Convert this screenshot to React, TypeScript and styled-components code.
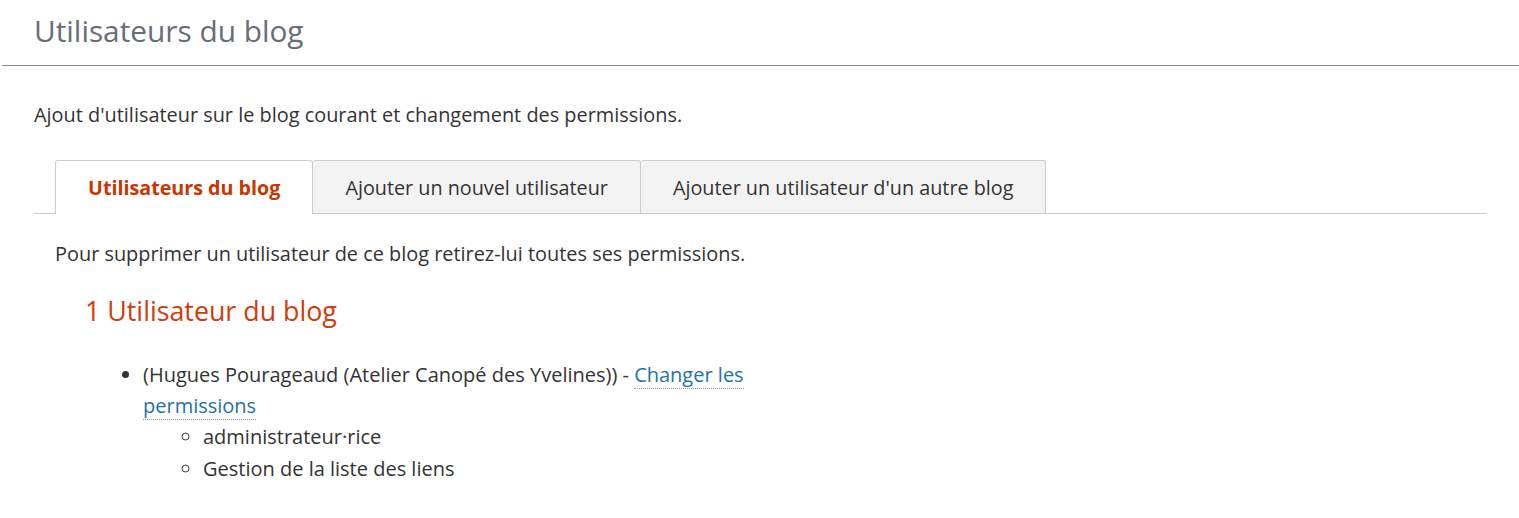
import React from 'react'
import styled, { createGlobalStyle } from 'styled-components';

const GlobalStyle = createGlobalStyle`
  html, body {
    margin: 0;
    padding: 0;
    background: #ffffff;
  }
  body {
    font-family: "Open Sans", "Noto Sans", sans-serif;
    color: #333333;
  }
`;

const tabs = [
  { label: 'Utilisateurs du blog', active: true },
  { label: 'Ajouter un nouvel utilisateur', active: false },
  { label: "Ajouter un utilisateur d'un autre blog", active: false },
];

const App = () => {
  return (
    <>
      <GlobalStyle />
      <Page>
        <Header>
          <Title>Utilisateurs du blog</Title>
        </Header>
        <Content>
          <Intro>Ajout d'utilisateur sur le blog courant et changement des permissions.</Intro>
          <TabBar>
            {tabs.map((t) => (
              <Tab key={t.label} active={t.active}>{t.label}</Tab>
            ))}
          </TabBar>
          <Panel>
            <Note>Pour supprimer un utilisateur de ce blog retirez-lui toutes ses permissions.</Note>
            <SubTitle>1 Utilisateur du blog</SubTitle>
            <UserList>
              <UserItem>
                (Hugues Pourageaud (Atelier Canopé des Yvelines)) - <PermLink href="#">Changer les permissions</PermLink>
                <PermList>
                  <PermItem>administrateur·rice</PermItem>
                  <PermItem>Gestion de la liste des liens</PermItem>
                </PermList>
              </UserItem>
            </UserList>
          </Panel>
        </Content>
      </Page>
    </>
  )
}

export default App;

const Page = styled.div`
  padding-left: 2px;
`;

const Header = styled.div`
  height: 65px;
  border-bottom: 1px solid #888888;
  display: flex;
  align-items: center;
  padding-left: 32px;
`;

const Title = styled.h2`
  margin: 0;
  font-size: 29.8px;
  font-weight: 400;
  color: #676e78;
  line-height: 1;
  padding-bottom: 4px;
`;

const Content = styled.div`
  padding: 0 32px;
`;

const Intro = styled.p`
  margin: 37px 0 0;
  font-size: 19.9px;
  line-height: 24px;
`;

const TabBar = styled.div`
  margin-top: 33px;
  display: flex;
  padding-left: 21px;
  border-bottom: 1px solid #cccccc;
`;

const Tab = styled.div<{ active: boolean }>`
  padding: 0 32px;
  display: flex;
  align-items: center;
  font-size: ${(p) => (p.active ? '19.7px' : '19.8px')};
  border: 1px solid #cccccc;
  border-bottom: none;
  border-left-width: ${(p) => (p.active ? '1px' : '0')};
  border-radius: 3px 3px 0 0;
  margin-bottom: ${(p) => (p.active ? '-1px' : '0')};
  height: ${(p) => (p.active ? '53px' : '52px')};
  background: ${(p) => (p.active ? '#ffffff' : '#f3f3f3')};
  color: ${(p) => (p.active ? '#c93600' : '#333333')};
  font-weight: ${(p) => (p.active ? 700 : 400)};
`;

const Panel = styled.div`
  padding-left: 21px;
`;

const Note = styled.p`
  margin: 28px 0 0;
  font-size: 19.9px;
  line-height: 24px;
`;

const SubTitle = styled.h3`
  margin: 28px 0 0 30px;
  font-size: 26.8px;
  font-weight: 400;
  line-height: 1.3;
  color: #d33c0a;
`;

const UserList = styled.ul`
  margin: 30px 0 0;
  padding-left: 88px;
  width: 610px;
  font-size: 20px;
  line-height: 31px;
`;

const UserItem = styled.li`
  list-style: disc;
`;

const PermLink = styled.a`
  color: #2373a8;
  text-decoration: none;
  border-bottom: 1px dotted #999999;
`;

const PermList = styled.ul`
  margin: 0;
  padding-left: 60px;
`;

const PermItem = styled.li`
  list-style: circle;
  line-height: 32px;
`;
